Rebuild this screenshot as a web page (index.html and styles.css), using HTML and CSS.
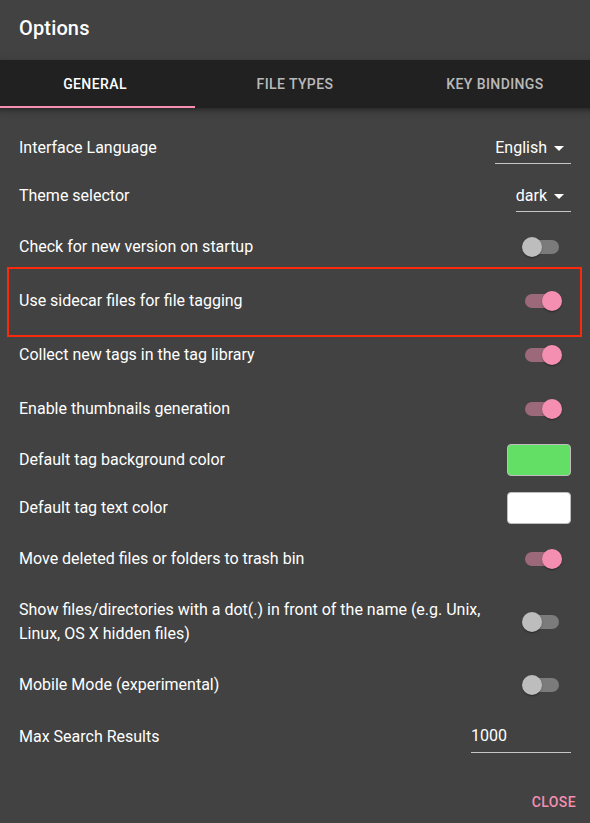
FILE: index.html
```html
<!DOCTYPE html>
<html lang="en">
<head>
<meta charset="utf-8">
<title>Options</title>
<link rel="stylesheet" href="styles.css">
</head>
<body>
<div class="dialog">
  <div class="title">Options</div>
  <div class="tabs">
    <div class="tab active">General</div>
    <div class="tab">File Types</div>
    <div class="tab">Key Bindings</div>
  </div>
  <div class="list">
    <div class="row row-48">
      <span class="label">Interface Language</span>
      <div class="select"><span>English</span><svg class="arrow" viewBox="0 0 24 24"><path d="M7 10l5 5 5-5z"/></svg></div>
    </div>
    <div class="row row-48">
      <span class="label">Theme selector</span>
      <div class="select"><span>dark</span><svg class="arrow" viewBox="0 0 24 24"><path d="M7 10l5 5 5-5z"/></svg></div>
    </div>
    <div class="row">
      <span class="label">Check for new version on startup</span>
      <div class="switch"><span class="track"></span><span class="thumb"></span></div>
    </div>
    <div class="row highlighted">
      <span class="label">Use sidecar files for file tagging</span>
      <div class="switch on"><span class="track"></span><span class="thumb"></span></div>
      <span class="mark"></span>
    </div>
    <div class="row">
      <span class="label">Collect new tags in the tag library</span>
      <div class="switch on"><span class="track"></span><span class="thumb"></span></div>
    </div>
    <div class="row">
      <span class="label">Enable thumbnails generation</span>
      <div class="switch on"><span class="track"></span><span class="thumb"></span></div>
    </div>
    <div class="row row-48">
      <span class="label">Default tag background color</span>
      <div class="swatch green"></div>
    </div>
    <div class="row row-48">
      <span class="label">Default tag text color</span>
      <div class="swatch white"></div>
    </div>
    <div class="row">
      <span class="label">Move deleted files or folders to trash bin</span>
      <div class="switch on"><span class="track"></span><span class="thumb"></span></div>
    </div>
    <div class="row">
      <span class="label multi">Show files/directories with a dot(.) in front of the name (e.g. Unix, Linux, OS X hidden files)</span>
      <div class="switch"><span class="track"></span><span class="thumb"></span></div>
    </div>
    <div class="row">
      <span class="label">Mobile Mode (experimental)</span>
      <div class="switch"><span class="track"></span><span class="thumb"></span></div>
    </div>
    <div class="row row-field">
      <span class="label">Max Search Results</span>
      <div class="field">1000</div>
    </div>
  </div>
  <div class="actions">
    <button class="btn">Close</button>
  </div>
</div>
</body>
</html>
```
FILE: styles.css
```css
html, body {
  margin: 0;
  padding: 0;
}
body {
  background: #424242;
  color: #fff;
  font-family: Roboto, "Liberation Sans", sans-serif;
  font-size: 16px;
}
.dialog {
  height: 823px;
  display: flex;
  flex-direction: column;
  background: #424242;
  overflow: hidden;
}
.title {
  height: 60px;
  box-sizing: border-box;
  padding: 16px 19px 0;
  font-size: 20px;
  font-weight: 500;
  line-height: 24px;
  letter-spacing: 0.15px;
}
.tabs {
  height: 48px;
  display: flex;
  margin: 0 -5px 0 -5px;
  background: #212121;
  position: relative;
  z-index: 1;
  box-shadow: 0 2px 4px -1px rgba(0,0,0,0.2), 0 4px 5px 0 rgba(0,0,0,0.14), 0 1px 10px 0 rgba(0,0,0,0.12);
}
.tab {
  flex: 1;
  display: flex;
  align-items: center;
  justify-content: center;
  font-size: 14px;
  font-weight: 500;
  text-transform: uppercase;
  letter-spacing: 0.4px;
  color: rgba(255,255,255,0.7);
  box-sizing: border-box;
  border-bottom: 2px solid transparent;
  padding-top: 2px;
}
.tab.active {
  color: #fff;
  border-bottom-color: #f48fb1;
}
.list {
  padding-top: 16px;
}
.row {
  position: relative;
  display: flex;
  align-items: center;
  justify-content: space-between;
  padding: 8px 19px;
  min-height: 38px;
}
.row-48 {
  min-height: 32px;
}
.row-field {
  min-height: 33px;
}
.label {
  line-height: 24px;
}
.label.multi {
  flex: 1;
  margin: 4px 13px 4px 0;
  line-height: 24px;
}
.select {
  height: 31px;
  display: flex;
  align-items: center;
  border-bottom: 1px solid rgba(255,255,255,0.7);
  line-height: 24px;
}
.arrow {
  width: 24px;
  height: 24px;
  fill: #fff;
}
.switch {
  position: relative;
  width: 58px;
  height: 38px;
  flex-shrink: 0;
}
.track {
  position: absolute;
  left: 12px;
  top: 12px;
  width: 34px;
  height: 14px;
  border-radius: 7px;
  background: #fff;
  opacity: 0.3;
}
.thumb {
  position: absolute;
  left: 9px;
  top: 9px;
  width: 20px;
  height: 20px;
  border-radius: 50%;
  background: #bdbdbd;
  box-shadow: 0 2px 1px -1px rgba(0,0,0,0.2), 0 1px 1px 0 rgba(0,0,0,0.14), 0 1px 3px 0 rgba(0,0,0,0.12);
}
.switch.on .track {
  background: #f48fb1;
  opacity: 0.5;
}
.switch.on .thumb {
  left: 29px;
  background: #f48fb1;
}
.swatch {
  width: 64px;
  height: 32px;
  box-sizing: border-box;
  border: 1px solid #bdbdbd;
  border-radius: 4px;
}
.swatch.green {
  background: #62df64;
}
.swatch.white {
  background: #fff;
}
.field {
  width: 100px;
  box-sizing: border-box;
  padding: 6px 0 7px;
  line-height: 19px;
  border-bottom: 1px solid rgba(255,255,255,0.7);
}
.mark {
  position: absolute;
  left: 7px;
  right: 8px;
  top: -7px;
  bottom: -9px;
  border: 2px solid #fb2a0c;
  pointer-events: none;
}
.actions {
  margin-top: auto;
  display: flex;
  justify-content: flex-end;
  padding: 8px 6px 3px 8px;
}
.btn {
  background: none;
  border: 0;
  height: 36px;
  padding: 6px 8px;
  font-family: Roboto, "Liberation Sans", sans-serif;
  font-size: 14px;
  font-weight: 500;
  letter-spacing: 0.4px;
  text-transform: uppercase;
  color: #f48fb1;
}
```
